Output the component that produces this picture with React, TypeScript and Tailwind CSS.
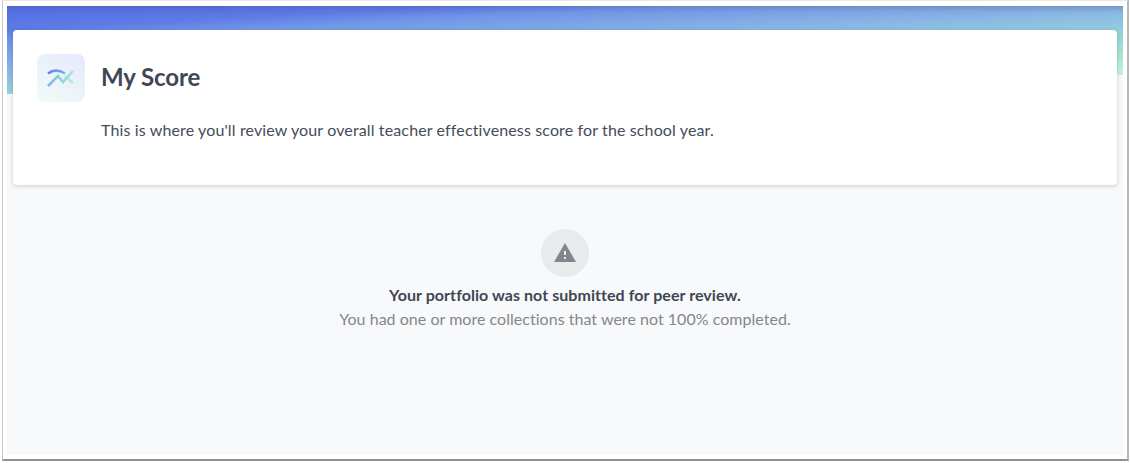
const App = () => {
  return (
    <div className="h-[463px] w-[1130px] overflow-hidden bg-white font-['Lato','Liberation_Sans',sans-serif]">
      <div className="ml-[2px] h-[461px] w-[1127px] border-t border-l border-r-2 border-b-2 border-t-[#e8e8e8] border-l-[#c8c8c8] border-r-[#b8b8b8] border-b-[#929292] pl-[4px] pr-[4px] pt-[5px] pb-[4px]">
        <div className="h-[449px] bg-[#f8f9fb]">
          <div className="h-[88px] bg-[linear-gradient(177deg,#5470e4_0%,#5e7ae5_16%,#7096e8_24%,#8ab8e4_44%,#95cfdc_57%,#bdf8d4_85%,#c4ffd4_100%)] shadow-[inset_0_6px_6px_-4px_rgba(60,60,90,0.28)] [clip-path:polygon(0_0,100%_0,100%_69px,0_88px)]" />
          <div className="relative mx-[6px] -mt-[64px] h-[155px] rounded-[4px] bg-white pl-[24px] pt-[24px] shadow-[0_1px_4px_rgba(30,40,60,0.22)]">
            <div className="flex items-center gap-[16px]">
              <div className="flex h-[48px] w-[48px] items-center justify-center rounded-[8px] bg-[linear-gradient(35deg,#f0fcf7_0%,#e5e9fc_100%)]">
                <svg width="30" height="22" viewBox="0 0 30 22" fill="none" strokeWidth="2.5">
                  <defs>
                    <linearGradient id="arc" x1="0" y1="0" x2="1" y2="0">
                      <stop offset="0" stopColor="#5f7cf0" />
                      <stop offset="1" stopColor="#7fb0e8" />
                    </linearGradient>
                    <linearGradient id="line" x1="0" y1="0" x2="1" y2="0">
                      <stop offset="0" stopColor="#7fb4ea" />
                      <stop offset="1" stopColor="#a3e8d0" />
                    </linearGradient>
                  </defs>
                  <path d="M2 6.500C7 2.500 13 2.500 19 6.500" stroke="url(#arc)" />
                  <path d="M19 9L27 16" stroke="#b0ecd0" />
                  <path d="M2 19L12 9L17 15L27 4" stroke="url(#line)" />
                </svg>
              </div>
              <h1 className="pb-[2px] text-[24px] leading-[28px] font-bold tracking-[-0.1px] text-[#3f4754]">My Score</h1>
            </div>
            <p className="mt-[17px] pl-[64px] text-[16px] leading-[22px] tracking-[0.13px] text-[#454c59]">
              This is where you'll review your overall teacher effectiveness score for the school year.
            </p>
          </div>
          <div className="mt-[44px] flex flex-col items-center">
            <div className="flex h-[48px] w-[48px] items-center justify-center rounded-full bg-[#e9eaec]">
              <svg width="24" height="24" viewBox="0 0 24 24" fill="#81858e">
                <path d="M1 21h22L12 2 1 21zm12-3h-2v-2h2v2zm0-4h-2v-4h2v4z" />
              </svg>
            </div>
            <p className="mt-[7px] text-[16px] leading-[22px] font-bold tracking-[0.06px] text-[#3f4754]">
              Your portfolio was not submitted for peer review.
            </p>
            <p className="mt-[2px] text-[16px] leading-[22px] tracking-[0.03px] text-[#84878d]">
              You had one or more collections that were not 100% completed.
            </p>
          </div>
        </div>
      </div>
    </div>
  );
};

export default App;
